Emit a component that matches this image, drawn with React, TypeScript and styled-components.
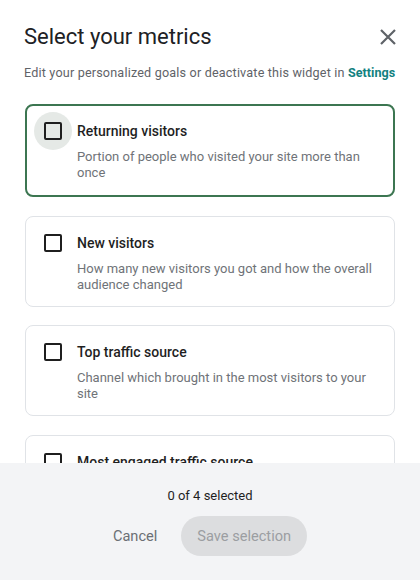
import styled, { createGlobalStyle, css } from 'styled-components';

const GlobalStyle = createGlobalStyle`
  html, body {
    margin: 0;
    padding: 0;
    background: #ffffff;
  }
  body {
    font-family: Roboto, "Liberation Sans", sans-serif;
    color: #202124;
  }
`;

const Dialog = styled.div`
  display: flex;
  flex-direction: column;
  width: 420px;
  height: 580px;
  overflow: hidden;
  background: #ffffff;
`;

const Header = styled.header`
  padding: 22px 20px 0 24px;
`;

const TitleRow = styled.div`
  display: flex;
  align-items: center;
  justify-content: space-between;
`;

const Title = styled.h1`
  margin: 0;
  font-size: 22px;
  font-weight: 400;
  line-height: 30px;
  color: #202124;
`;

const CloseButton = styled.button`
  display: flex;
  align-items: center;
  justify-content: center;
  width: 24px;
  height: 24px;
  padding: 0;
  border: none;
  background: none;
  cursor: pointer;
`;

const Subtitle = styled.p`
  margin: 12px 0 0;
  font-size: 12.6px;
  line-height: 18px;
  color: #5f6368;
  letter-spacing: 0.18px;

  & > a {
    color: #12817f;
    font-weight: 700;
    letter-spacing: 0;
    text-decoration: none;
  }
`;

const List = styled.ul`
  flex: 1;
  min-height: 0;
  overflow: hidden;
  display: flex;
  flex-direction: column;
  gap: 18.5px;
  margin: 0;
  padding: 22px 25px 0;
  list-style: none;
`;

const Card = styled.li<{ $active?: boolean }>`
  flex: none;
  display: flex;
  align-items: flex-start;
  gap: 15px;
  box-sizing: border-box;
  padding: 17px 20px 13px 18px;
  border: 1px solid #e0e3e7;
  border-radius: 8px;

  ${(p) =>
    p.$active &&
    css`
      border: 2px solid #3c7651;
      padding: 16px 19px 14px 17px;
    `}
`;

const CheckWrap = styled.span<{ $hover?: boolean }>`
  flex: none;
  display: flex;
  align-items: center;
  justify-content: center;
  width: 38px;
  height: 38px;
  margin: -10px -10px 0 -10px;
  border-radius: 50%;
  background: ${(p) => (p.$hover ? '#e5e9e6' : 'transparent')};
`;

const Box = styled.span`
  display: block;
  width: 14px;
  height: 14px;
  border: 2px solid #1f1f1f;
  border-radius: 2px;
`;

const Text = styled.div`
  display: flex;
  flex-direction: column;
`;

const CardTitle = styled.span`
  font-size: 14px;
  font-weight: 500;
  line-height: 18px;
  color: #1f1f1f;
`;

const CardDesc = styled.span`
  margin-top: 9px;
  font-size: 13px;
  line-height: 16px;
  color: #6f7378;
`;

const Footer = styled.footer`
  flex: none;
  display: flex;
  flex-direction: column;
  align-items: center;
  height: 117px;
  box-sizing: border-box;
  padding-top: 25px;
  background: #f3f4f6;
`;

const Count = styled.span`
  font-size: 13px;
  line-height: 16px;
  color: #1f1f1f;
`;

const Actions = styled.div`
  display: flex;
  align-items: center;
  gap: 24px;
  margin-top: 12px;
`;

const TextButton = styled.button`
  height: 40px;
  padding: 0;
  border: none;
  background: none;
  font-family: inherit;
  font-size: 14.6px;
  color: #6b6f74;
  cursor: pointer;
`;

const PillButton = styled.button`
  height: 40px;
  padding: 0 16px;
  border: none;
  border-radius: 20px;
  background: #dcdddf;
  font-family: inherit;
  font-size: 14.6px;
  color: #9b9ea2;
`;

const metrics = [
  {
    title: 'Returning visitors',
    desc: 'Portion of people who visited your site more than once',
  },
  {
    title: 'New visitors',
    desc: 'How many new visitors you got and how the overall audience changed',
  },
  {
    title: 'Top traffic source',
    desc: 'Channel which brought in the most visitors to your site',
  },
  {
    title: 'Most engaged traffic source',
    desc: 'Channel whose visitors spent the most time on your site',
  },
];

export default function App() {
  return (
    <>
      <GlobalStyle />
      <Dialog>
        <Header>
          <TitleRow>
            <Title>Select your metrics</Title>
            <CloseButton aria-label="Close">
              <svg width="16" height="16" viewBox="0 0 16 16">
                <path d="M1 1 L15 15 M15 1 L1 15" stroke="#5f6368" strokeWidth="2.2" />
              </svg>
            </CloseButton>
          </TitleRow>
          <Subtitle>
            Edit your personalized goals or deactivate this widget in <a href="#">Settings</a>
          </Subtitle>
        </Header>
        <List>
          {metrics.map((m, i) => (
            <Card key={m.title} $active={i === 0}>
              <CheckWrap $hover={i === 0}>
                <Box />
              </CheckWrap>
              <Text>
                <CardTitle>{m.title}</CardTitle>
                <CardDesc>{m.desc}</CardDesc>
              </Text>
            </Card>
          ))}
        </List>
        <Footer>
          <Count>0 of 4 selected</Count>
          <Actions>
            <TextButton>Cancel</TextButton>
            <PillButton disabled>Save selection</PillButton>
          </Actions>
        </Footer>
      </Dialog>
    </>
  );
}
